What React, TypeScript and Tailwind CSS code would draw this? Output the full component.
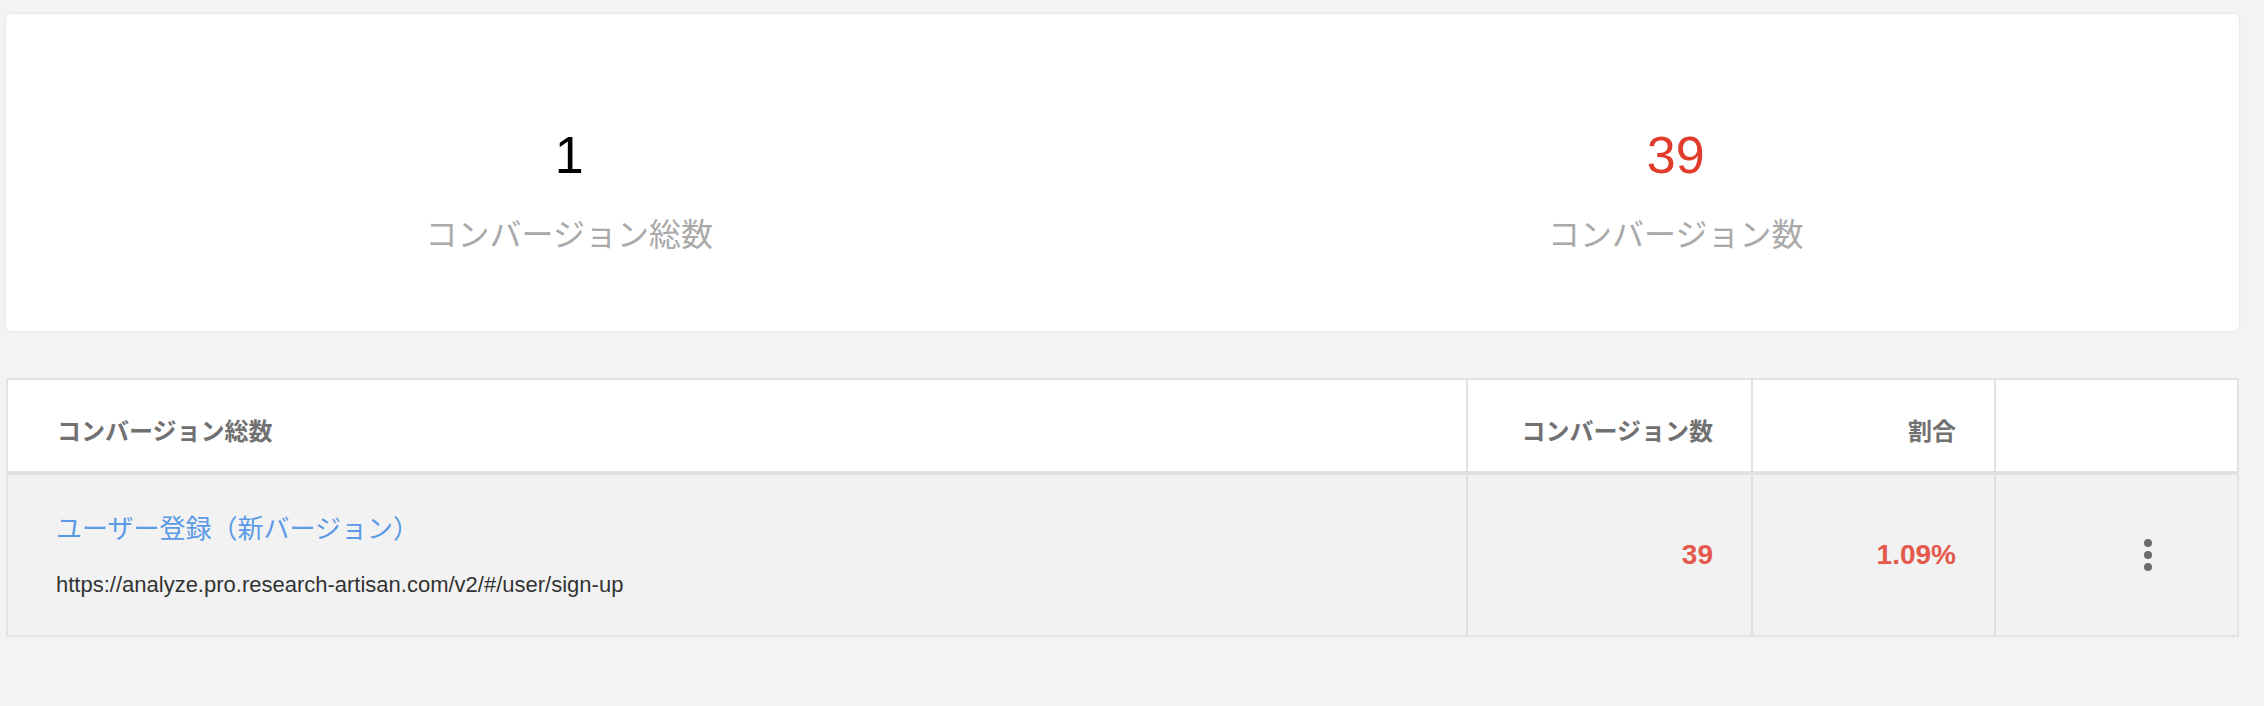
const font = 'font-["Liberation_Sans","Noto_Sans_CJK_JP",sans-serif]';

function Stat({ value, label, red }: { value: string; label: string; red?: boolean }) {
  return (
    <div className="flex flex-col items-center">
      <div className={`text-[52px] leading-none ${red ? 'text-[#e03c2c]' : 'text-black'}`}>{value}</div>
      <div className="mt-[38px] text-[32px] leading-[32px] text-[#a9a9a9]">{label}</div>
    </div>
  );
}

function MoreIcon() {
  return (
    <svg width="8" height="32" viewBox="0 0 8 32" className="fill-[#6b6b6b]">
      <circle cx="4" cy="4" r="4" />
      <circle cx="4" cy="16" r="4" />
      <circle cx="4" cy="28" r="4" />
    </svg>
  );
}

export default function App() {
  return (
    <div className={`min-h-screen bg-[#f3f3f3] pl-[6px] pr-[25px] pt-[14px] pb-[70px] ${font}`}>
      {/* Summary card */}
      <div className="grid h-[317px] grid-cols-2 rounded-[5px] bg-white px-[10px] pt-[115px] shadow-[0_0_2px_rgba(0,0,0,0.15)]">
        <Stat value="1" label="コンバージョン総数" />
        <Stat value="39" label="コンバージョン数" red />
      </div>

      {/* Conversion table */}
      <div className="mt-[47px] border-2 border-[#e3e3e7]">
        <div className="grid h-[95px] grid-cols-[1fr_285px_243px_243px] border-b-4 border-[#e1e1e5] bg-white text-[24px] font-bold text-[#717171]">
          <div className="flex items-center pl-[49px] pt-[12px]">コンバージョン総数</div>
          <div className="flex items-center justify-end border-l-2 border-[#e1e1e5] pr-[38px] pt-[12px]">コンバージョン数</div>
          <div className="flex items-center justify-end border-l-2 border-[#e1e1e5] pr-[38px] pt-[12px]">割合</div>
          <div className="border-l-2 border-[#e1e1e5]" />
        </div>
        <div className="grid h-[160px] grid-cols-[1fr_285px_243px_243px] bg-[#f2f2f2]">
          <div className="flex flex-col justify-center pl-[48px] pt-[2px]">
            <a className="text-[26px] leading-[30px] text-[#5b9ae6]">ユーザー登録（新バージョン）</a>
            <div className="mt-[28px] text-[22px] leading-[26px] text-[#333]">
              https://analyze.pro.research-artisan.com/v2/#/user/sign-up
            </div>
          </div>
          <div className="flex items-center justify-end border-l-2 border-[#e1e1e5] pr-[38px] text-[28px] font-bold text-[#e4594c]">
            39
          </div>
          <div className="flex items-center justify-end border-l-2 border-[#e1e1e5] pr-[38px] text-[28px] font-bold text-[#e4594c]">
            1.09%
          </div>
          <div className="flex items-center justify-end border-l-2 border-[#e1e1e5] pr-[85px]">
            <MoreIcon />
          </div>
        </div>
      </div>
    </div>
  );
}
